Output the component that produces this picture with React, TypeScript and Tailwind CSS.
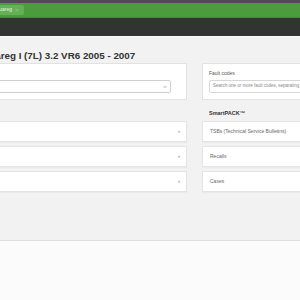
import { ChevronDown } from "lucide-react";

const rowsLeft = ["", "", ""];
const rowsRight = ["TSBs (Technical Service Bulletins)", "Recalls", "Cases"];

export default function App() {
  return (
    <div className="w-[300px] h-[300px] overflow-hidden bg-[#fbfbfb] font-['Liberation_Sans',Arial,sans-serif]">
      {/* Top bars */}
      <div className="h-[3px] bg-[#4d4d4d]" />
      <div className="h-[15px] bg-[#4b9c3d] border-b border-[#3f8a33] flex items-center">
        <div className="ml-[-22px] h-[10px] w-[46px] rounded-[2px] bg-[#64b057] flex items-center justify-end gap-[3px] pr-[5px] text-[5px] text-[#e6f2e3]">
          <span>Touareg</span>
          <ChevronDown className="h-[4px] w-[4px]" strokeWidth={3} />
        </div>
      </div>
      <div className="h-[18px] bg-[#333333]" />

      {/* Main */}
      <div className="h-[204px] bg-[#f2f2f2] border-t border-[#fafafa]">
        <div className="ml-[-22px] w-[340px]">
          <h1 className="mt-[13px] h-[11px] text-[9.8px] leading-[11px] font-bold text-[#333] whitespace-nowrap">
            Touareg I (7L) 3.2 VR6 2005 - 2007
          </h1>

          <div className="mt-[2px] grid grid-cols-[209px_131px] gap-x-[15px]">
            {/* Engine select card */}
            <div className="h-[37px] bg-white border border-[#e2e2e2] pt-[6px] pl-[5px] pr-[15px]">
              <div className="h-[7px]" />
              <div className="mt-[3px] h-[13px] border border-[#cfcfcf] rounded-[2px] bg-white flex items-center justify-end pr-[3px]">
                <ChevronDown className="h-[4px] w-[4px] text-[#444]" strokeWidth={3} />
              </div>
            </div>

            {/* Fault codes card */}
            <div className="h-[37px] bg-white border border-[#e2e2e2] pt-[6px] pl-[6px]">
              <div className="h-[7px] text-[5px] leading-[7px] text-[#555]">Fault codes</div>
              <div className="mt-[3px] h-[13px] border border-[#d6d6d6] rounded-[2px] bg-white flex items-center pl-[3px] text-[4.5px] text-[#888] whitespace-nowrap overflow-hidden">
                Search one or more fault codes, separating them with a comma
              </div>
            </div>

            {/* SmartPACK heading */}
            <div />
            <div className="mt-[10px] h-[6px] pl-[7px] text-[5.5px] leading-[6px] font-bold text-[#333]">
              SmartPACK™
            </div>

            {/* Rows */}
            <div className="mt-[5px] flex flex-col gap-[4px]">
              {rowsLeft.map((_, i) => (
                <div
                  key={i}
                  className="h-[21px] bg-white border border-[#e4e4e4] shadow-[0_1px_1px_rgba(0,0,0,0.03)] flex items-center justify-end pr-[6px] text-[6px] text-[#666]"
                >
                  ›
                </div>
              ))}
            </div>
            <div className="mt-[5px] flex flex-col gap-[4px]">
              {rowsRight.map((t) => (
                <div
                  key={t}
                  className="h-[21px] bg-white border border-[#e4e4e4] shadow-[0_1px_1px_rgba(0,0,0,0.03)] flex items-center pl-[7px] text-[5px] text-[#666] whitespace-nowrap"
                >
                  {t}
                </div>
              ))}
            </div>
          </div>
        </div>
      </div>
      <div className="border-t border-[#dcdcdc]" />
    </div>
  );
}
